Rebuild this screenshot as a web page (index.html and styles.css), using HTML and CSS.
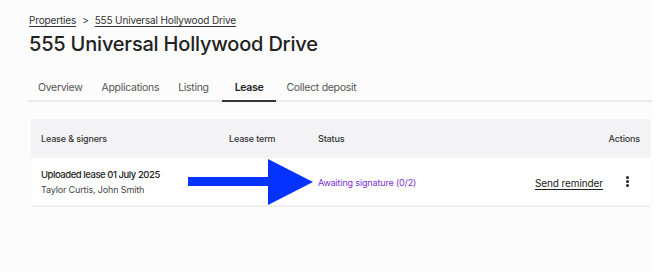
FILE: index.html
```html
<!DOCTYPE html>
<html lang="en">

<head>
    <meta charset="UTF-8">
    <meta name="viewport" content="width=device-width, initial-scale=1">
    <title>555 Universal Hollywood Drive</title>
    <link rel="stylesheet" href="styles.css">
</head>

<body>
    <div class="page">
        <div class="breadcrumb">
            <a href="#">Properties</a>
            <span class="sep">&gt;</span>
            <a href="#">555 Universal Hollywood Drive</a>
        </div>
        <h1>555 Universal Hollywood Drive</h1>

        <nav class="tabs">
            <a class="tab" href="#">Overview</a>
            <a class="tab" href="#">Applications</a>
            <a class="tab" href="#">Listing</a>
            <a class="tab active" href="#">Lease</a>
            <a class="tab" href="#">Collect deposit</a>
        </nav>

        <div class="lease-table">
            <div class="row head">
                <div class="cell">Lease &amp; signers</div>
                <div class="cell">Lease term</div>
                <div class="cell">Status</div>
                <div class="cell actions">Actions</div>
            </div>
            <div class="row body">
                <div class="cell">
                    <div class="lease-name">Uploaded lease 01 July 2025</div>
                    <div class="signers">Taylor Curtis, John Smith</div>
                </div>
                <div class="cell"></div>
                <div class="cell status">Awaiting signature (0/2)</div>
                <div class="cell actions">
                    <a class="reminder" href="#">Send reminder</a>
                    <span class="kebab"><i></i><i></i><i></i></span>
                </div>
            </div>

            <!-- annotation arrow drawn over the row -->
            <svg class="arrow" width="126" height="46" viewBox="0 0 126 46">
                <rect x="0" y="18" width="82" height="9" fill="#0432ff" />
                <polygon points="80,0 125,23 80,46" fill="#0432ff" />
            </svg>
        </div>
    </div>
</body>

</html>
```

FILE: styles.css
```css
body {
    font-family: Inter, "Liberation Sans", sans-serif;
    background: #fff;
    margin: 0;
    padding: 0;
    color: #222;
}

.page {
    width: 652px;
    min-height: 272px;
    background: #fcfcfc;
    box-sizing: border-box;
    padding: 14px 0 0 28px;
}

.breadcrumb {
    font-size: 10px;
    letter-spacing: -0.15px;
    color: #333;
    display: flex;
    align-items: center;
    gap: 6px;
    padding-left: 1px;
}

.breadcrumb a {
    color: #333;
    text-decoration: underline;
    text-underline-offset: 2px;
}

h1 {
    font-size: 20px;
    font-weight: 500;
    margin: 6px 0 0 1px;
    letter-spacing: -0.2px;
    color: #222;
}

.tabs {
    display: flex;
    margin-top: 17px;
    border-bottom: 2px solid #ebebeb;
    height: 27px;
}

.tab {
    font-size: 10.5px;
    letter-spacing: -0.3px;
    color: #555;
    text-decoration: none;
    padding: 3px 10px 0;
    margin-right: -1px;
    line-height: 24px;
}

.tab.active {
    color: #222;
    font-weight: 600;
    padding: 3px 13px 0;
    margin: 0 0 -2px 4px;
    border-bottom: 2px solid #333;
}

.lease-table {
    position: relative;
    margin: 17px 0 0 3px;
    width: 619px;
    font-size: 9px;
}

.row {
    display: grid;
    grid-template-columns: 188px 89px 1fr 200px;
}

.row.head {
    background: #f3f3f6;
    height: 39px;
    align-items: center;
    color: #333;
    font-weight: 500;
    letter-spacing: -0.15px;
}

.row.body {
    background: #fff;
    height: 47px;
    align-items: center;
    border-bottom: 2px solid #f0f0f0;
}

.cell {
    padding-left: 10px;
}

.cell.actions {
    padding-right: 10px;
    text-align: right;
    display: flex;
    justify-content: flex-end;
    align-items: center;
}

.lease-name {
    font-size: 9.5px;
    letter-spacing: -0.45px;
    font-weight: 500;
    color: #222;
    padding-top: 1px;
}

.signers {
    margin-top: 4px;
    color: #444;
    font-size: 9px;
    letter-spacing: -0.15px;
}

.status {
    color: #7a2fd8;
    font-size: 9px;
    letter-spacing: -0.15px;
    padding-top: 2px;
}

.reminder {
    font-size: 10px;
    letter-spacing: -0.1px;
    color: #222;
    text-decoration: underline;
    text-underline-offset: 2px;
    padding-top: 2px;
}

.kebab {
    display: flex;
    flex-direction: column;
    gap: 1px;
    margin: 0 11px 0 23px;
}

.kebab i {
    width: 3px;
    height: 3px;
    border-radius: 50%;
    background: #222;
}

.arrow {
    position: absolute;
    left: 157px;
    top: 40px;
}
```
